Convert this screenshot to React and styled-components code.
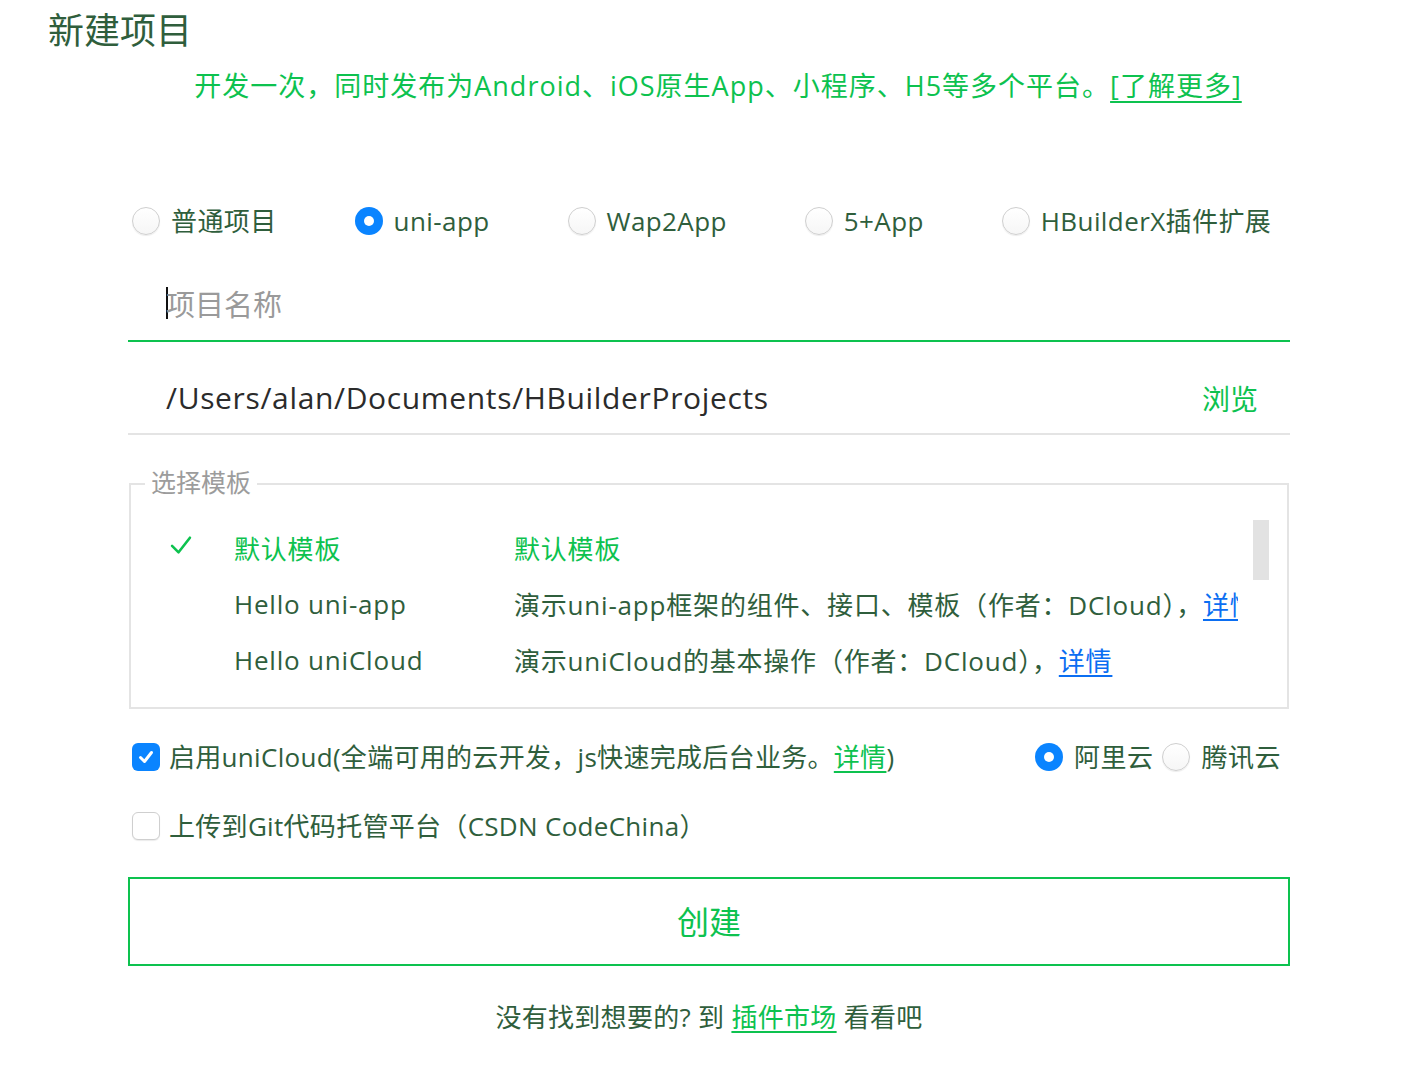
import React, { useState } from 'react';
import styled, { createGlobalStyle, css } from 'styled-components';

const GREEN = '#0dc24f';
const TEXT = '#2f5e3c';
const BLUE = '#0a84ff';

const GlobalStyle = createGlobalStyle`
  html, body {
    margin: 0;
    padding: 0;
    background: #fff;
  }
  body {
    font-family: "Open Sans", "Noto Sans CJK SC", sans-serif;
    color: ${TEXT};
  }
`;

const Page = styled.div`
  width: 1424px;
  min-height: 1074px;
  box-sizing: border-box;
`;

const Title = styled.h1`
  margin: 0;
  padding-left: 48px;
  font-family: "Noto Sans CJK SC", sans-serif;
  font-weight: 400;
  font-size: 36px;
  line-height: 56px;
  color: ${TEXT};
`;

const Subtitle = styled.p`
  margin: 10px 0 0;
  text-align: center;
  font-size: 27px;
  line-height: 40px;
  letter-spacing: 1px;
  color: ${GREEN};
  padding-left: 12px;

  a {
    color: ${GREEN};
    text-decoration: underline;
    text-underline-offset: 5px;
  }
`;

const Form = styled.div`
  margin-left: 128px;
  width: 1162px;
`;

const TypeRow = styled.div`
  display: flex;
  align-items: center;
  gap: 78px;
  margin-top: 95px;
  padding-left: 4px;
  height: 40px;
`;

const Option = styled.label`
  display: flex;
  align-items: center;
  gap: ${({ $gap }) => $gap ?? 11}px;
  font-size: 26px;
  line-height: 40px;
  letter-spacing: ${({ $spacing }) => $spacing ?? 0.5}px;
  color: ${TEXT};
  white-space: nowrap;
  cursor: pointer;
`;

const RadioDot = styled.span`
  flex: none;
  width: 28px;
  height: 28px;
  border-radius: 50%;
  box-sizing: border-box;
  ${({ $on }) =>
    $on
      ? css`
          background: ${BLUE};
          display: flex;
          align-items: center;
          justify-content: center;
          &::after {
            content: '';
            width: 10px;
            height: 10px;
            border-radius: 50%;
            background: #fff;
          }
        `
      : css`
          background: linear-gradient(#ffffff, #f6f6f6);
          border: 1px solid #cfcfcf;
          box-shadow: 0 1px 1px rgba(0, 0, 0, 0.08);
        `}
`;

const NameField = styled.div`
  margin-top: 25px;
  height: 74px;
  border-bottom: 2px solid ${GREEN};
  display: flex;
  align-items: center;
  padding-left: 38px;
`;

const Caret = styled.span`
  width: 2px;
  height: 32px;
  background: #111;
  margin-right: -2px;
`;

const Placeholder = styled.span`
  font-family: "Noto Sans CJK SC", sans-serif;
  font-size: 29px;
  color: #9a9a9a;
`;

const PathRow = styled.div`
  display: flex;
  align-items: center;
  justify-content: space-between;
  padding: 36px 32px 15px 38px;
  line-height: 40px;
  border-bottom: 2px solid #e4e4e4;
  font-size: 28px;
`;

const PathText = styled.span`
  color: #2b2b2b;
  font-size: 30px;
  letter-spacing: 0.65px;
`;

const Browse = styled.span`
  color: ${GREEN};
  font-family: "Noto Sans CJK SC", sans-serif;
`;

const Panel = styled.div`
  position: relative;
  margin-top: 48px;
  margin-left: 1px;
  width: 1160px;
  box-sizing: border-box;
  border: 2px solid #e4e4e4;
  padding: 35px 49px 19px 37px;
`;

const Legend = styled.span`
  position: absolute;
  top: -20px;
  left: 14px;
  padding: 0 6px;
  background: #fff;
  font-family: "Noto Sans CJK SC", sans-serif;
  font-size: 25px;
  line-height: 32px;
  color: #9c9c9c;
`;

const Thumb = styled.div`
  position: absolute;
  top: 35px;
  right: 18px;
  width: 16px;
  height: 60px;
  background: #e2e2e2;
`;

const TplRow = styled.div`
  display: grid;
  grid-template-columns: 66px 280px 1fr;
  align-items: center;
  height: 56px;
  font-size: 26px;
  letter-spacing: 0.8px;
  color: ${({ $active }) => ($active ? GREEN : TEXT)};
`;

const Cell = styled.span`
  white-space: nowrap;
  overflow: hidden;
`;

const Link = styled.a`
  color: ${({ $blue }) => ($blue ? '#0b6ef2' : GREEN)};
  text-decoration: underline;
  text-underline-offset: 4px;
  cursor: pointer;
`;

const CheckRow = styled.div`
  display: flex;
  align-items: center;
  justify-content: space-between;
  height: 40px;
  margin-top: ${({ $top }) => $top}px;
  padding: 0 9px 0 4px;
`;

const Box = styled.span`
  flex: none;
  width: 28px;
  height: 28px;
  border-radius: 6px;
  box-sizing: border-box;
  display: flex;
  align-items: center;
  justify-content: center;
  ${({ $on }) =>
    $on
      ? css`
          background: ${BLUE};
        `
      : css`
          background: #fff;
          border: 1px solid #cfcfcf;
          box-shadow: 0 1px 1px rgba(0, 0, 0, 0.08);
        `}
`;

const CloudGroup = styled.div`
  display: flex;
  align-items: center;
  gap: 9px;
`;

const CreateButton = styled.button`
  display: block;
  width: 100%;
  height: 89px;
  margin-top: 31px;
  padding-bottom: 4px;
  background: #fff;
  border: 2px solid ${GREEN};
  color: ${GREEN};
  font-family: "Noto Sans CJK SC", sans-serif;
  font-size: 32px;
  cursor: pointer;
`;

const Footer = styled.p`
  margin: 31px 0 0;
  text-align: center;
  font-size: 26px;
  line-height: 40px;
  letter-spacing: 0.3px;
  color: ${TEXT};
`;

const types = ['普通项目', 'uni-app', 'Wap2App', '5+App', 'HBuilderX插件扩展'];

const templates = [
  { name: '默认模板', desc: '默认模板' },
  { name: 'Hello uni-app', desc: '演示uni-app框架的组件、接口、模板（作者：DCloud），', link: true },
  { name: 'Hello uniCloud', desc: '演示uniCloud的基本操作（作者：DCloud），', link: true },
];

function Tick({ color = '#fff', size = 16, width = 3 }) {
  return (
    <svg width={size} height={size} viewBox="0 0 16 16" fill="none">
      <polyline
        points="2.5,8.5 6.5,12.5 13.5,3.5"
        stroke={color}
        strokeWidth={width}
        strokeLinecap="round"
        strokeLinejoin="round"
      />
    </svg>
  );
}

export default function App() {
  const [type, setType] = useState('uni-app');
  const [tpl, setTpl] = useState(0);
  const [cloud, setCloud] = useState(true);
  const [git, setGit] = useState(false);
  const [vendor, setVendor] = useState('阿里云');

  return (
    <Page>
      <GlobalStyle />
      <Title>新建项目</Title>
      <Subtitle>
        开发一次，同时发布为Android、iOS原生App、小程序、H5等多个平台。<a>[了解更多]</a>
      </Subtitle>

      <Form>
        <TypeRow>
          {types.map((t) => (
            <Option key={t} $spacing={0.4} onClick={() => setType(t)}>
              <RadioDot $on={type === t} />
              {t}
            </Option>
          ))}
        </TypeRow>

        <NameField>
          <Caret />
          <Placeholder>项目名称</Placeholder>
        </NameField>

        <PathRow>
          <PathText>/Users/alan/Documents/HBuilderProjects</PathText>
          <Browse>浏览</Browse>
        </PathRow>

        <Panel>
          <Legend>选择模板</Legend>
          <Thumb />
          {templates.map((t, i) => (
            <TplRow key={t.name} $active={tpl === i} onClick={() => setTpl(i)}>
              <span>{tpl === i && <Tick color={GREEN} size={26} width={1.6} />}</span>
              <Cell>{t.name}</Cell>
              <Cell>
                {t.desc}
                {t.link && <Link $blue>详情</Link>}
              </Cell>
            </TplRow>
          ))}
        </Panel>

        <CheckRow $top={28}>
          <Option $gap={9} $spacing={0.3} onClick={() => setCloud(!cloud)}>
            <Box $on={cloud}>{cloud && <Tick />}</Box>
            <span>
              启用uniCloud(全端可用的云开发，js快速完成后台业务。<Link>详情</Link>)
            </span>
          </Option>
          <CloudGroup>
            {['阿里云', '腾讯云'].map((v) => (
              <Option key={v} onClick={() => setVendor(v)}>
                <RadioDot $on={vendor === v} />
                {v}
              </Option>
            ))}
          </CloudGroup>
        </CheckRow>

        <CheckRow $top={29}>
          <Option $gap={9} $spacing={0.3} onClick={() => setGit(!git)}>
            <Box $on={git}>{git && <Tick />}</Box>
            上传到Git代码托管平台（CSDN CodeChina）
          </Option>
        </CheckRow>

        <CreateButton>创建</CreateButton>

        <Footer>
          没有找到想要的? 到 <Link>插件市场</Link> 看看吧
        </Footer>
      </Form>
    </Page>
  );
}
